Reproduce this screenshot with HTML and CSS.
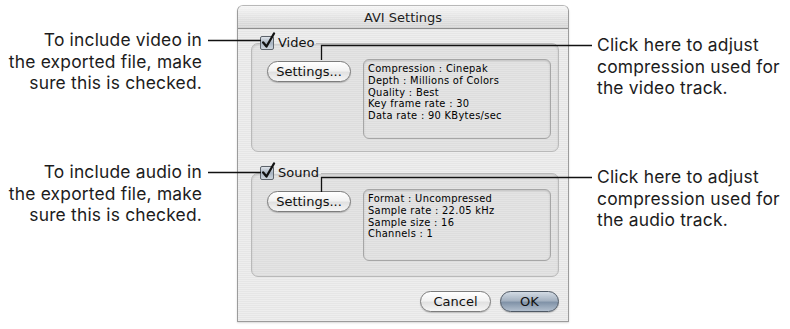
FILE: index.html
```html
<!DOCTYPE html>
<html>
<head>
<meta charset="utf-8">
<title>AVI Settings</title>
<link rel="stylesheet" href="styles.css">
</head>
<body>
<div class="page">
  <div class="notes notes-left">
    <p class="note note-video">To include video in<br>the exported file, make<br>sure this is checked.</p>
    <p class="note note-audio">To include audio in<br>the exported file, make<br>sure this is checked.</p>
  </div>

  <div class="dialog">
    <div class="titlebar">AVI Settings</div>
    <div class="dialog-body">
      <fieldset class="group group-video">
        <legend class="group-title">
          <span class="check"><svg width="16" height="18" viewBox="0 0 16 18"><defs><linearGradient id="cb1" x1="0" y1="0" x2="0" y2="1"><stop offset="0" stop-color="#e3e7ec"/><stop offset="0.5" stop-color="#a7b3c1"/><stop offset="1" stop-color="#d2d9e1"/></linearGradient></defs><rect x="0.5" y="4.5" width="13" height="13" rx="1.5" fill="url(#cb1)" stroke="#5d636b"/><path d="M3.2 10.5 L6.5 14.5 L14 1.5" fill="none" stroke="#111" stroke-width="2.3" stroke-linecap="round" stroke-linejoin="round"/></svg></span>Video
        </legend>
        <div class="group-row">
          <button class="btn btn-settings">Settings...</button>
          <div class="info info-video">Compression : Cinepak<br>Depth : Millions of Colors<br>Quality : Best<br>Key frame rate : 30<br>Data rate : 90 KBytes/sec</div>
        </div>
      </fieldset>

      <fieldset class="group group-sound">
        <legend class="group-title">
          <span class="check"><svg width="16" height="18" viewBox="0 0 16 18"><defs><linearGradient id="cb2" x1="0" y1="0" x2="0" y2="1"><stop offset="0" stop-color="#e3e7ec"/><stop offset="0.5" stop-color="#a7b3c1"/><stop offset="1" stop-color="#d2d9e1"/></linearGradient></defs><rect x="0.5" y="4.5" width="13" height="13" rx="1.5" fill="url(#cb2)" stroke="#5d636b"/><path d="M3.2 10.5 L6.5 14.5 L14 1.5" fill="none" stroke="#111" stroke-width="2.3" stroke-linecap="round" stroke-linejoin="round"/></svg></span>Sound
        </legend>
        <div class="group-row">
          <button class="btn btn-settings">Settings...</button>
          <div class="info info-sound">Format : Uncompressed<br>Sample rate : 22.05 kHz<br>Sample size : 16<br>Channels : 1</div>
        </div>
      </fieldset>

      <div class="actions">
        <button class="btn btn-cancel">Cancel</button>
        <button class="btn btn-ok">OK</button>
      </div>
    </div>
  </div>

  <div class="notes notes-right">
    <p class="note note-video-settings">Click here to adjust<br>compression used for<br>the video track.</p>
    <p class="note note-audio-settings">Click here to adjust<br>compression used for<br>the audio track.</p>
  </div>

  <svg class="leaders" width="790" height="329" viewBox="0 0 790 329">
    <path d="M208 40.5 H261" />
    <path d="M321.5 60 V45.5 H592" />
    <path d="M208 172.5 H261" />
    <path d="M321.5 192 V177.5 H592" />
  </svg>
</div>
</body>
</html>
```

FILE: styles.css
```css
* { box-sizing: border-box; }

html, body {
  margin: 0;
  padding: 0;
  background: #ffffff;
}

.page {
  position: relative;
  width: 790px;
  height: 329px;
  display: grid;
  grid-template-columns: 237px 332px 1fr;
  align-items: start;
  overflow: hidden;
}

.notes {
  display: flex;
  flex-direction: column;
  font-family: "Inter", "Open Sans", sans-serif;
  font-size: 17.4px;
  letter-spacing: 0.2px;
  line-height: 21.5px;
  color: #1c1c1c;
  white-space: nowrap;
}

.note { margin: 0; }

.notes-left {
  text-align: right;
  padding-right: 35px;
  padding-top: 29px;
}
.notes-left .note-audio { margin-top: 67.5px; }

.notes-right {
  padding-left: 28px;
  padding-top: 34px;
}
.notes-right .note-audio-settings { margin-top: 67.5px; }

/* dialog */
.dialog {
  margin-top: 5px;
  height: 317px;
  border: 1px solid #9c9c9c;
  border-top-color: #b8b8b8;
  border-radius: 6px 6px 0 0;
  background: repeating-linear-gradient(#eeeeee 0 1px, #e6e6e6 1px 2px);
  display: flex;
  flex-direction: column;
  font-family: "DejaVu Sans", "Liberation Sans", sans-serif;
  color: #111;
  box-shadow: 0 1px 2px rgba(0,0,0,0.15);
}

.titlebar {
  height: 23px;
  flex: none;
  border-bottom: 1px solid #8e8e8e;
  border-radius: 5px 5px 0 0;
  background:
    repeating-linear-gradient(rgba(255,255,255,0.25) 0 1px, rgba(0,0,0,0) 1px 2px),
    linear-gradient(#f4f4f4, #d2d2d2);
  display: flex;
  align-items: center;
  justify-content: center;
  font-size: 13px;
  color: #1e1e1e;
}

.dialog-body {
  flex: 1;
  display: flex;
  flex-direction: column;
  padding: 6px 9px 0 13px;
}

.group {
  margin: 0;
  border: 1px solid #b9b9b9;
  border-radius: 7px;
  background: repeating-linear-gradient(#e4e4e4 0 1px, #dddddd 1px 2px);
  box-shadow: inset 0 1px 2px rgba(0,0,0,0.12);
  padding: 0;
}

.group-sound { margin-top: 13px; }

.group-title {
  display: flex;
  align-items: center;
  gap: 2px;
  margin-left: 8px;
  padding: 0 2px 0 0;
  font-size: 13px;
  line-height: 16px;
}

.check {
  display: block;
  width: 16px;
  height: 18px;
  margin-top: -5px;
}
.check svg { display: block; }

.group-row {
  display: flex;
  align-items: flex-start;
  gap: 12px;
  padding: 8px 6px 12px 15px;
}
.group-sound .group-row { padding-bottom: 15px; }

.btn {
  font-family: "DejaVu Sans", "Liberation Sans", sans-serif;
  font-size: 13px;
  color: #111;
  height: 21px;
  padding: 0;
  border: 1px solid #7c7c7c;
  border-radius: 11px;
  background: linear-gradient(#ffffff 0%, #f2f2f2 45%, #e1e1e1 55%, #f6f6f6 100%);
  box-shadow: 0 1px 1px rgba(0,0,0,0.2);
  line-height: 19px;
}

.btn-settings {
  width: 84px;
  margin-top: 2px;
}

.info {
  width: 188px;
  border: 1px solid #a6a6a6;
  border-radius: 6px;
  box-shadow: inset 0 1px 2px rgba(0,0,0,0.15);
  padding: 3px 0 0 4px;
  font-family: "DejaVu Sans", sans-serif;
  font-size: 9.9px;
  letter-spacing: 0.3px;
  line-height: 11.8px;
  color: #000;
  white-space: nowrap;
}
.info-video { height: 80px; }
.info-sound { height: 72px; }

.actions {
  display: flex;
  justify-content: flex-end;
  gap: 9px;
  margin-top: 14px;
  padding-right: 0;
}

.btn-cancel { width: 71px; }

.btn-ok {
  width: 59px;
  border-color: #4e5864;
  background: linear-gradient(#d3dbe4 0%, #a5b2c1 45%, #8193a8 55%, #b2bfce 100%);
}

/* callout leader lines (annotation overlay) */
.leaders {
  position: absolute;
  left: 0;
  top: 0;
  pointer-events: none;
}
.leaders path {
  fill: none;
  stroke: #111;
  stroke-width: 1.3;
}
```
